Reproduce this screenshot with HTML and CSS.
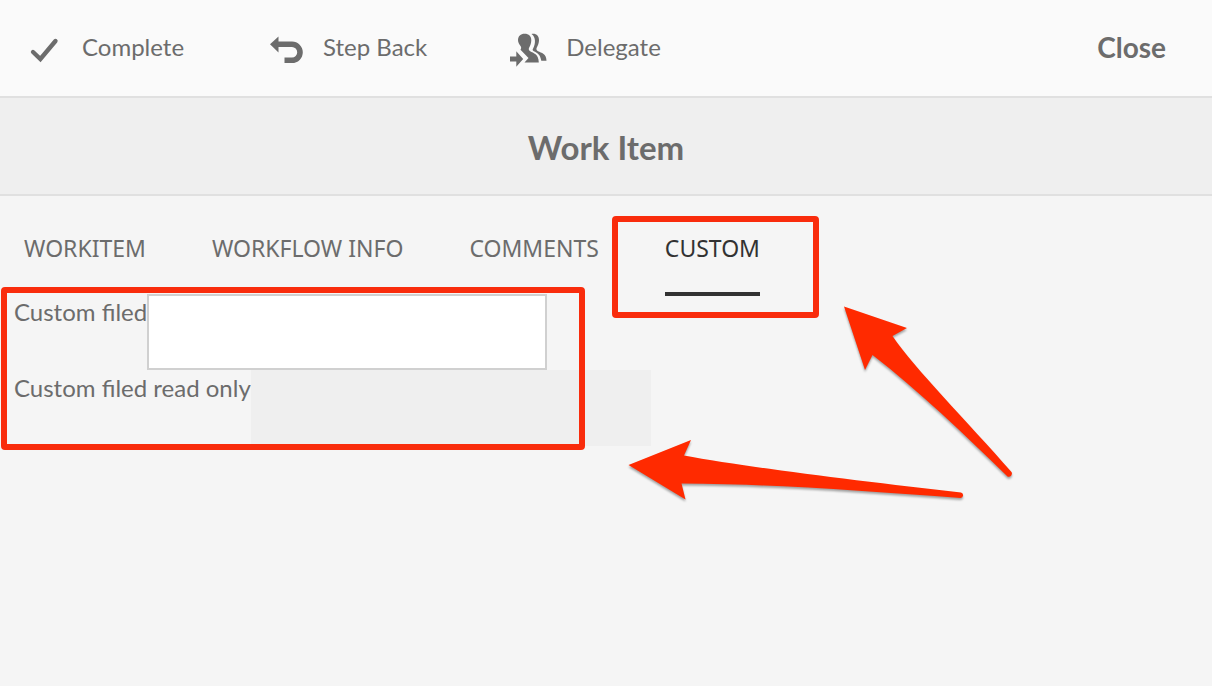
FILE: index.html
```html
<!DOCTYPE html>
<html lang="en">
<head>
<meta charset="utf-8">
<meta name="viewport" content="width=device-width, initial-scale=1">
<title>Work Item</title>
<link rel="stylesheet" href="styles.css">
</head>
<body>
<header class="toolbar">
  <div class="actions">
    <button type="button" class="action">
      <svg class="icon" viewBox="0 0 36 36" aria-hidden="true"><path d="M7 23l7.400 7L29.500 12" fill="none" stroke="currentColor" stroke-width="4.300" stroke-linecap="round"/></svg>
      <span>Complete</span>
    </button>
    <button type="button" class="action">
      <svg class="icon" viewBox="0 0 36 36" aria-hidden="true"><path d="M3 15.300L11.500 7.500v5H25a10.800 10.800 0 0 1 0 21.600h-7.500v-5.600H25a5.200 5.200 0 0 0 0-10.400H11.500v5.400z" fill="currentColor"/></svg>
      <span>Step Back</span>
    </button>
    <button type="button" class="action">
      <svg class="icon" viewBox="0 0 36 36" aria-hidden="true"><g fill="currentColor"><path d="M14.500 4.700c4.500 0 6.800 2.500 6.800 6.500 0 3-1 5.300-2.100 7.200-.8 1.500-.4 3 1 3.900 3.200 2 8.300 2.500 8.600 11.200H14.500l4-4.500-8-8.200c.9-1.200.9-2.300.2-3.500C9.200 15 8 13.500 8 11c0-4 2.700-6.300 6.500-6.300z"/><path d="M21.500 5c4.700-.8 7.500 1.700 7.500 6.300 0 3-1.200 5.200-2.200 7.200-.8 1.500-.3 3 1.200 3.700 3.500 1.600 8.500 2.300 8.500 9.600h-5.200c-1-6.500-4.200-8.200-7.500-9.600-1.500-.7-1.300-1.500-.7-2.600 2.500-4.800 3-11.500-1.600-14.600z"/><path d="M0 27.500h6.300v-5.200l6.900 7.700-6.900 7.700v-5.200H0z"/></g></svg>
      <span>Delegate</span>
    </button>
  </div>
  <button type="button" class="close">Close</button>
</header>
<div class="title-bar"><h1 class="title">Work Item</h1></div>
<main class="content">
  <div class="tabs" role="tablist">
    <button type="button" class="tab" role="tab" aria-selected="false">WORKITEM</button>
    <button type="button" class="tab" role="tab" aria-selected="false">WORKFLOW INFO</button>
    <button type="button" class="tab" role="tab" aria-selected="false">COMMENTS</button>
    <button type="button" class="tab tab-active" role="tab" aria-selected="true">CUSTOM</button>
  </div>
  <form class="fields">
    <div class="field"><label class="label" for="custom">Custom filed</label><input class="input" id="custom" type="text"></div>
    <div class="field"><label class="label" for="custom-readonly">Custom filed read only</label><input class="input input-readonly" id="custom-readonly" type="text" readonly></div>
  </form>
</main>
<div class="mark mark-fields"></div>
<div class="mark mark-tab"></div>
<svg class="arrows" width="400" height="210" viewBox="620 300 400 210" aria-hidden="true">
  <path d="M844 306.500L907 328L892.500 336C915 369 967 421 1011.500 472A3.200 3.200 0 0 1 1007.500 476.500C965 435 918 390 872.500 355L865 370z"/>
  <path d="M628.500 465L691 440L684 455.500C745 467 860 481 961 492.500A2.800 2.800 0 0 1 960.500 498C865 491 775 484 681.500 483.500L685.500 499.500z"/>
</svg>
</body>
</html>
```
FILE: styles.css
```css
* { box-sizing: border-box; }
body {
  margin: 0;
  min-height: 100vh;
  position: relative;
  background: #f5f5f5;
  color: #6c6c6c;
  font-family: Lato, "Noto Sans", sans-serif;
  font-size: 24px;
  line-height: 36px;
}
button {
  padding: 0;
  border: 0;
  background: none;
  color: inherit;
  font: inherit;
  cursor: pointer;
}
.toolbar {
  display: flex;
  justify-content: space-between;
  align-items: center;
  height: 98px;
  padding: 0 46px 2px 26px;
  border-bottom: 2px solid #e0e0e0;
  background: #fafafa;
}
.actions { display: flex; gap: 83px; }
.action { display: flex; align-items: center; gap: 20px; }
.icon { width: 36px; height: 36px; overflow: visible; }
.close { font-size: 28px; font-weight: 700; }
.title-bar {
  display: flex;
  justify-content: center;
  align-items: center;
  height: 98px;
  padding-top: 2px;
  border-bottom: 2px solid #e0e0e0;
  background: #efefef;
}
.title { margin: 0; font-size: 33px; font-weight: 700; }
.tabs { display: flex; gap: 66px; height: 98px; padding: 0 24px; }
.tab {
  height: 100px;
  padding-top: 8px;
  border-bottom: 4px solid transparent;
  font-family: "Noto Sans", sans-serif;
  font-size: 23px;
}
.tab-active { border-bottom-color: #323232; color: #323232; }
.fields { margin: 0; padding: 0 14px; }
.field { display: flex; align-items: flex-start; height: 76px; }
.input {
  width: 400px;
  height: 76px;
  padding: 0 16px;
  border: 2px solid #d0d0d0;
  border-radius: 0;
  background: #fff;
  color: #323232;
  font: inherit;
}
.input-readonly { border-color: #efefef; background: #efefef; }
.mark { position: absolute; border: 6px solid #f92c0c; border-radius: 4px; pointer-events: none; }
.mark-fields { left: 1px; top: 287px; width: 584px; height: 163px; }
.mark-tab { left: 612px; top: 216px; width: 207px; height: 102px; }
.arrows {
  position: absolute;
  left: 620px;
  top: 300px;
  fill: #ff2a00;
  filter: drop-shadow(0 2px 1px rgba(0, 0, 0, 0.35));
  pointer-events: none;
}
```
